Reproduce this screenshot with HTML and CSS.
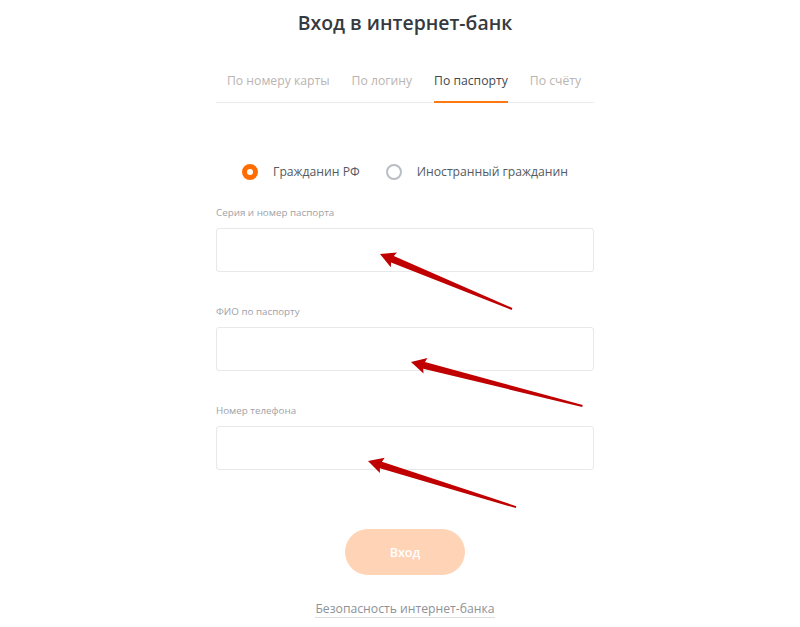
FILE: index.html
```html
<!DOCTYPE html>
<html lang="ru">
<head>
<meta charset="utf-8">
<title>Вход в интернет-банк</title>
<link rel="stylesheet" href="styles.css">
</head>
<body>
<div class="page">
  <div class="panel">
    <h1 class="title">Вход в интернет-банк</h1>
    <ul class="tabs">
      <li class="tab">По номеру карты</li>
      <li class="tab">По логину</li>
      <li class="tab tab-active">По паспорту</li>
      <li class="tab">По счёту</li>
    </ul>
    <div class="radios">
      <label class="radio"><span class="dot dot-on"></span><span class="radio-text">Гражданин РФ</span></label>
      <label class="radio"><span class="dot"></span><span class="radio-text">Иностранный гражданин</span></label>
    </div>
    <div class="field">
      <div class="label">Серия и номер паспорта</div>
      <div class="input"></div>
    </div>
    <div class="field">
      <div class="label">ФИО по паспорту</div>
      <div class="input"></div>
    </div>
    <div class="field">
      <div class="label">Номер телефона</div>
      <div class="input"></div>
    </div>
    <div class="actions">
      <button class="btn">Вход</button>
      <a class="link">Безопасность интернет-банка</a>
    </div>
  </div>
</div>
<svg class="arrows" width="800" height="627" viewBox="0 0 800 627">
  <g fill="#c00000">
    <polygon transform="translate(380 254) rotate(22.6)" points="0,0 15,-8 13.5,-3.5 143,-1 143,1 13.5,3.5 15,8"/>
    <polygon transform="translate(411 362) rotate(14.4)" points="0,0 15,-8 13.5,-3.5 177,-1 177,1 13.5,3.5 15,8"/>
    <polygon transform="translate(368 461) rotate(17.3)" points="0,0 15,-8 13.5,-3.5 155,-1 155,1 13.5,3.5 15,8"/>
  </g>
</svg>
</body>
</html>
```

FILE: styles.css
```css
* { box-sizing: border-box; }
html, body { margin: 0; padding: 0; background: #fff; }
body {
  font-family: "Open Sans", "Noto Sans", sans-serif;
  width: 800px;
  height: 627px;
  overflow: hidden;
  position: relative;
}
.page {
  padding-left: 10px;
  padding-top: 9px;
}
.panel {
  width: 378px;
  margin: 0 auto;
  display: flex;
  flex-direction: column;
}
.title {
  margin: 0;
  font-size: 19.4px;
  line-height: 28px;
  font-weight: 600;
  color: #353a40;
  text-align: center;
}
.tabs {
  list-style: none;
  margin: 35px 0 0;
  padding: 0;
  display: flex;
  border-bottom: 1px solid #ececec;
}
.tab {
  margin: 0 11px -1px;
  padding-bottom: 11px;
  font-size: 12.2px;
  line-height: 18px;
  color: #b9b4b2;
  border-bottom: 2px solid transparent;
  white-space: nowrap;
}
.tab-active {
  color: #43484e;
  border-bottom-color: #ff7a12;
}
.radios {
  margin-top: 59px;
  display: flex;
  justify-content: center;
  gap: 26px;
  height: 20px;
  align-items: center;
}
.radio {
  display: flex;
  align-items: center;
  gap: 15px;
}
.dot {
  width: 16px;
  height: 16px;
  border-radius: 50%;
  border: 2px solid #b9bdc4;
  background: #fff;
}
.dot-on {
  border: 5px solid #ff6d00;
}
.radio-text {
  font-size: 12.2px;
  line-height: 18px;
  color: #555a60;
}
.field {
  margin-top: 24px;
  display: flex;
  flex-direction: column;
  gap: 8px;
}
.field + .field { margin-top: 33px; }
.label {
  font-size: 9.8px;
  line-height: 14px;
  color: #9ea2a8;
}
.input {
  height: 44px;
  border: 1px solid #e7e8ea;
  border-radius: 3px;
  background: #fff;
}
.actions {
  margin-top: 59px;
  display: flex;
  flex-direction: column;
  align-items: center;
}
.btn {
  width: 120px;
  height: 46px;
  border: none;
  border-radius: 23px;
  background: #ffd3b6;
  color: #fff;
  font-family: "Open Sans", "Noto Sans", sans-serif;
  font-size: 12.5px;
  font-weight: 600;
  padding: 0;
}
.link {
  margin-top: 25px;
  font-size: 12.2px;
  line-height: 17px;
  color: #8d9298;
  border-bottom: 1px solid #dcdee1;
}
.arrows {
  position: absolute;
  left: 0;
  top: 0;
  pointer-events: none;
}
```
